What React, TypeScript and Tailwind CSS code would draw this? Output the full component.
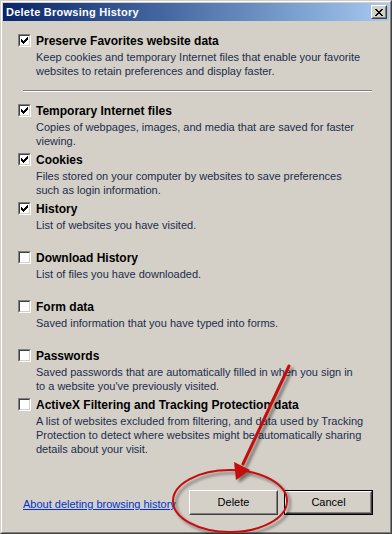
import React from "react";

const FONT = { fontFamily: '"Liberation Sans", Arial, sans-serif' };

function Check({ checked }: { checked: boolean }) {
  const pts = [
    [6, 0], [5, 1], [6, 1], [0, 2], [4, 2], [5, 2], [6, 2],
    [0, 3], [1, 3], [3, 3], [4, 3], [5, 3],
    [0, 4], [1, 4], [2, 4], [3, 4], [4, 4],
    [1, 5], [2, 5], [3, 5], [2, 6],
  ];
  return (
    <div className="w-[13px] h-[13px] shrink-0 border border-t-[#808080] border-l-[#808080] border-b-white border-r-white">
      <div className="w-[11px] h-[11px] border border-t-[#404040] border-l-[#404040] border-b-[#d4d0c8] border-r-[#d4d0c8] bg-white">
        {checked && (
          <svg width="9" height="9" viewBox="0 0 9 9" shapeRendering="crispEdges">
            {pts.map(([x, y], i) => (
              <rect key={i} x={x + 1} y={y + 1} width="1" height="1" fill="#000" />
            ))}
          </svg>
        )}
      </div>
    </div>
  );
}

function Item({
  checked,
  title,
  lines,
  className = "",
}: {
  checked: boolean;
  title: string;
  lines: string[];
  className?: string;
}) {
  return (
    <div className={`flex gap-[5px] ${className}`}>
      <div>
        <Check checked={checked} />
      </div>
      <div className="flex flex-col">
        <div className="text-[12px] leading-[14px] font-bold text-black">{title}</div>
        <div className="mt-[2px] text-[11px] leading-[14px] text-[#1c2d4c]">
          {lines.map((l, i) => (
            <div key={i}>{l}</div>
          ))}
        </div>
      </div>
    </div>
  );
}

function ClassicButton({ label, isDefault }: { label: string; isDefault?: boolean }) {
  const inner = (
    <div className="h-full w-full border border-t-white border-l-white border-b-[#404040] border-r-[#404040]">
      <div className="h-full w-full border border-t-[#d4d0c8] border-l-[#d4d0c8] border-b-[#808080] border-r-[#808080] flex items-center justify-center text-[11px] text-black">
        {label}
      </div>
    </div>
  );
  return (
    <div className={`w-[89px] h-[25px] ${isDefault ? "border border-black" : ""}`}>{inner}</div>
  );
}

export default function App() {
  return (
    <div className="relative w-[392px] h-[534px] overflow-hidden" style={FONT}>
      <div className="w-full h-full border border-t-[#d4d0c8] border-l-[#d4d0c8] border-b-[#404040] border-r-[#404040]">
        <div className="w-full h-full border border-t-white border-l-white border-b-[#808080] border-r-[#808080] bg-[#d4d0c8] p-px flex flex-col">
          {/* Title bar */}
          <div className="h-[18px] shrink-0 bg-gradient-to-r from-[#0a246a] to-[#a6caf0] flex items-center justify-between pl-[3px] pr-[2px]">
            <span className="text-[11px] font-bold text-white leading-[18px] tracking-[0.25px]">Delete Browsing History</span>
            <div className="w-[16px] h-[14px] border border-t-white border-l-white border-b-[#404040] border-r-[#404040]">
              <div className="w-full h-full bg-[#d4d0c8] border border-t-[#d4d0c8] border-l-[#d4d0c8] border-b-[#808080] border-r-[#808080] flex items-center justify-center">
                <svg width="8" height="7" viewBox="0 0 8 7" shapeRendering="crispEdges">
                  <path d="M0 0h2v1h-2zM6 0h2v1h-2zM1 1h2v1h-2zM5 1h2v1h-2zM2 2h4v1h-4zM3 3h2v1h-2zM2 4h4v1h-4zM1 5h2v1h-2zM5 5h2v1h-2zM0 6h2v1h-2zM6 6h2v1h-2z" fill="#000" />
                </svg>
              </div>
            </div>
          </div>

          {/* Content */}
          <div className="flex flex-col pl-[15px] pr-[15px] pt-[13px]">
            <Item
              checked
              title="Preserve Favorites website data"
              lines={[
                "Keep cookies and temporary Internet files that enable your favorite",
                "websites to retain preferences and display faster.",
              ]}
            />
            <div className="ml-[5px] mr-[2px] mt-[12px] h-[2px] border-t border-t-[#808080] border-b border-b-white" />
            <div className="mt-[12px] flex flex-col">
              <Item
                className="h-[49px]"
                checked
                title="Temporary Internet files"
                lines={["Copies of webpages, images, and media that are saved for faster", "viewing."]}
              />
              <Item
                className="h-[49px]"
                checked
                title="Cookies"
                lines={["Files stored on your computer by websites to save preferences", "such as login information."]}
              />
              <Item className="h-[49px]" checked title="History" lines={["List of websites you have visited."]} />
              <Item className="h-[49px]" checked={false} title="Download History" lines={["List of files you have downloaded."]} />
              <Item className="h-[49px]" checked={false} title="Form data" lines={["Saved information that you have typed into forms."]} />
              <Item
                className="h-[49px]"
                checked={false}
                title="Passwords"
                lines={[
                  "Saved passwords that are automatically filled in when you sign in",
                  "to a website you've previously visited.",
                ]}
              />
              <Item
                checked={false}
                title="ActiveX Filtering and Tracking Protection data"
                lines={[
                  "A list of websites excluded from filtering, and data used by Tracking",
                  "Protection to detect where websites might be automatically sharing",
                  "details about your visit.",
                ]}
              />
            </div>
          </div>

          {/* Footer */}
          <div className="mt-auto mb-[16px] flex items-center pl-[20px] pr-[16px]">
            <a className="text-[11px] text-[#0033cc] underline leading-[14px] mt-[3px]">About deleting browsing history</a>
            <div className="ml-auto flex gap-[6px]">
              <ClassicButton label="Delete" />
              <ClassicButton label="Cancel" isDefault />
            </div>
          </div>
        </div>
      </div>

      {/* Annotation overlay */}
      <svg className="absolute inset-0 pointer-events-none" width="392" height="534" viewBox="0 0 392 534">
        <defs>
          <filter id="sh" x="-20%" y="-20%" width="140%" height="140%">
            <feGaussianBlur in="SourceAlpha" stdDeviation="1.5" />
            <feOffset dx="3" dy="3" result="b" />
            <feComponentTransfer>
              <feFuncA type="linear" slope="0.45" />
            </feComponentTransfer>
            <feMerge>
              <feMergeNode />
              <feMergeNode in="SourceGraphic" />
            </feMerge>
          </filter>
        </defs>
        <g filter="url(#sh)">
          <ellipse cx="230" cy="501" rx="57" ry="31" fill="none" stroke="#c40d0d" strokeWidth="2" />
          <line x1="289" y1="366" x2="243" y2="464" stroke="#c40d0d" strokeWidth="3" strokeLinecap="round" />
          <polygon points="236,480 234,462 250,470" fill="#c40d0d" />
        </g>
      </svg>
    </div>
  );
}
